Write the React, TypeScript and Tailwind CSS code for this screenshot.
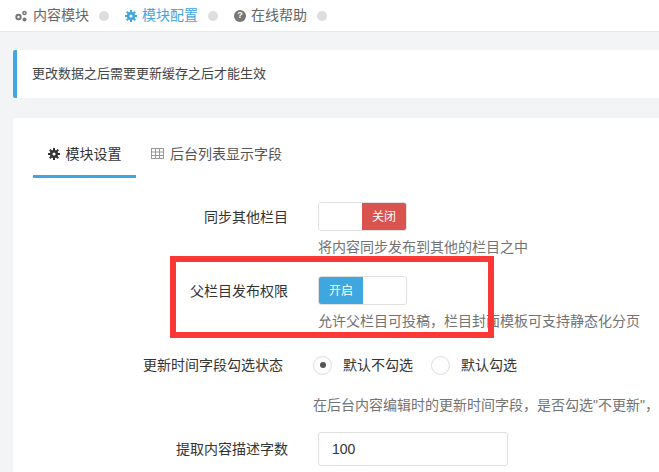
export default function App() {
  const font = { fontFamily: '"Liberation Sans", "Noto Sans CJK SC", sans-serif' }
  return (
    <div style={font} className="w-[659px] h-[472px] overflow-hidden bg-[#f3f4f6] text-[14px] text-[#333]">
      {/* breadcrumb */}
      <div className="h-[32px] bg-white border-b border-[#e5e9ef] flex items-center pl-[14px] gap-[6px] text-[14px]">
        <span className="flex items-center gap-[5px] text-[#666]">
          <svg width="14" height="12" viewBox="0 0 14 12" fill="#777"><circle cx="4.5" cy="7" r="3.2" /><circle cx="4.5" cy="7" r="1.2" fill="#fff" /><circle cx="10.5" cy="3" r="2.3" /><circle cx="10.5" cy="3" r="0.8" fill="#fff" /><circle cx="10.5" cy="9.5" r="2" /></svg>
          内容模块
        </span>
        <span className="w-[10px] h-[10px] rounded-full bg-[#ddd] mx-[4px]" />
        <span className="flex items-center gap-[5px] text-[#3fa7e0] ml-[6px]">
          <svg width="12" height="12" viewBox="0 0 12 12" fill="#3fa7e0"><circle cx="6" cy="6" r="4" /><rect x="5" y="0" width="2" height="12" /><rect x="0" y="5" width="12" height="2" /><rect x="5" y="0" width="2" height="12" transform="rotate(45 6 6)" /><rect x="5" y="0" width="2" height="12" transform="rotate(-45 6 6)" /><circle cx="6" cy="6" r="1.6" fill="#fff" /></svg>
          模块配置
        </span>
        <span className="w-[10px] h-[10px] rounded-full bg-[#ddd] mx-[4px]" />
        <span className="flex items-center gap-[5px] text-[#666] ml-[6px]">
          <span className="w-[12px] h-[12px] rounded-full bg-[#777] text-white text-[9px] font-bold flex items-center justify-center">?</span>
          在线帮助
        </span>
        <span className="w-[10px] h-[10px] rounded-full bg-[#ddd] mx-[4px]" />
      </div>

      <div className="pl-[13px] pt-[18px]">
        <div className="h-[48px] bg-white border-l-[4px] border-[#3fa7e0] rounded-l-[2px] flex items-center pl-[15px] text-[13px] text-[#444]">
          更改数据之后需要更新缓存之后才能生效
        </div>

        <div className="mt-[20px] bg-white rounded-tl-[4px] h-[400px]">
          {/* tabs */}
          <div className="flex pt-[24px] pl-[20px] h-[60px]">
            <div className="w-[103px] border-b-[3px] border-[#3fa7e0] flex items-start justify-center gap-[6px] pt-[2px] text-[#333]">
              <svg className="mt-[4px]" width="12" height="12" viewBox="0 0 12 12" fill="#333"><circle cx="6" cy="6" r="4" /><rect x="5" y="0" width="2" height="12" /><rect x="0" y="5" width="12" height="2" /><rect x="5" y="0" width="2" height="12" transform="rotate(45 6 6)" /><rect x="5" y="0" width="2" height="12" transform="rotate(-45 6 6)" /><circle cx="6" cy="6" r="1.6" fill="#fff" /></svg>
              模块设置
            </div>
            <div className="flex items-start gap-[6px] pl-[15px] pt-[2px] text-[#555]">
              <svg className="mt-[4px]" width="13" height="11" viewBox="0 0 13 11" fill="none" stroke="#999" strokeWidth="1"><rect x="0.5" y="0.5" width="12" height="10" /><path d="M0.5 4h12M0.5 7.5h12M4.5 0.5v10M8.5 0.5v10" /></svg>
              后台列表显示字段
            </div>
          </div>

          {/* form */}
          <div className="mt-[24px]">
            <Row label="同步其他栏目" help="将内容同步发布到其他的栏目之中">
              <div className="w-[89px] h-[29px] border border-[#e0e0e0] rounded-[3px] flex overflow-hidden">
                <span className="flex-1 bg-white" />
                <span className="w-[44px] bg-[#d9534f] text-white flex items-center justify-center text-[12px]">关闭</span>
              </div>
            </Row>

            <div className="relative">
              <div className="absolute left-[157px] top-[-20px] w-[324px] h-[82px] border-[6px] border-[#fb3737]" />
              <Row label="父栏目发布权限" help="允许父栏目可投稿，栏目封面模板可支持静态化分页">
                <div className="w-[89px] h-[29px] border border-[#e0e0e0] rounded-[3px] flex overflow-hidden">
                  <span className="w-[44px] bg-[#3fa7e0] text-white flex items-center justify-center text-[12px]">开启</span>
                  <span className="flex-1 bg-white" />
                </div>
              </Row>
            </div>

            <div className="flex mt-[4px]">
              <div className="w-[305px] text-right pr-[30px] leading-[22px]">更新时间字段勾选状态</div>
              <div>
                <div className="flex items-center h-[22px]">
                  <span className="w-[19px] h-[19px] rounded-full border border-[#ddd] flex items-center justify-center"><span className="w-[6px] h-[6px] rounded-full bg-[#555]" /></span>
                  <span className="ml-[11px]">默认不勾选</span>
                  <span className="ml-[18px] w-[19px] h-[19px] rounded-full border border-[#ddd]" />
                  <span className="ml-[11px]">默认勾选</span>
                </div>
                <div className="mt-[19px] text-[#737373] whitespace-nowrap">在后台内容编辑时的更新时间字段，是否勾选"不更新"，</div>
              </div>
            </div>

            <div className="flex mt-[16px] items-center">
              <div className="w-[305px] text-right pr-[30px]">提取内容描述字数</div>
              <div className="w-[190px] h-[34px] border border-[#e0e0e0] rounded-[3px] flex items-center pl-[13px] text-[14px]">100</div>
            </div>
          </div>
        </div>
      </div>
    </div>
  )
}

function Row({ label, help, children }: { label: string; help: string; children: React.ReactNode }) {
  return (
    <div className="flex h-[74px]">
      <div className="w-[305px] text-right pr-[30px] pt-[5px]">{label}</div>
      <div>
        {children}
        <div className="mt-[6px] text-[#737373] whitespace-nowrap">{help}</div>
      </div>
    </div>
  )
}
